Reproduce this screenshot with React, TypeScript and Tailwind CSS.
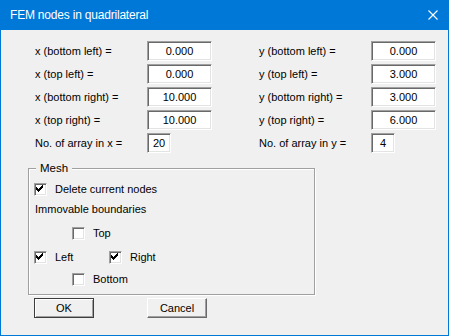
import React from 'react';

const font = { fontFamily: '"Liberation Sans", Arial, sans-serif' };

function Field({ label, value, small }: { label: string; value: string; small?: boolean }) {
  return (
    <div className="flex items-center">
      <div className="w-[112px] h-[20px] flex items-center">{label}</div>
      <div
        className={`${small ? 'w-[24px]' : 'w-[65px]'} h-[20px] bg-white flex items-center justify-center border border-t-[#a0a0a0] border-l-[#a0a0a0] border-b-white border-r-white shadow-[inset_1px_1px_0_#696969,inset_-1px_-1px_0_#e3e3e3]`}
      >
        {value}
      </div>
    </div>
  );
}

function CheckMark() {
  return (
    <svg width="13" height="13" viewBox="0 0 13 13" shapeRendering="crispEdges" className="absolute -left-[1px] -top-[1px]">
      <rect x="8" y="2" width="1" height="1" fill="#000" />
      <rect x="7" y="3" width="2" height="1" fill="#000" />
      <rect x="2" y="4" width="1" height="1" fill="#000" />
      <rect x="6" y="4" width="3" height="1" fill="#000" />
      <rect x="2" y="5" width="2" height="1" fill="#000" />
      <rect x="5" y="5" width="3" height="1" fill="#000" />
      <rect x="2" y="6" width="5" height="1" fill="#000" />
      <rect x="3" y="7" width="3" height="1" fill="#000" />
      <rect x="4" y="8" width="1" height="1" fill="#000" />
    </svg>
  );
}

function Check({ label, checked }: { label: string; checked?: boolean }) {
  return (
    <div className="flex items-center h-[13px]">
      <div className="relative w-[13px] h-[13px] bg-white border border-t-[#a0a0a0] border-l-[#a0a0a0] border-b-white border-r-white shadow-[inset_1px_1px_0_#696969,inset_-1px_-1px_0_#e3e3e3]">
        {checked && <CheckMark />}
      </div>
      <span className="ml-[8px] leading-[13px]">{label}</span>
    </div>
  );
}

export default function App() {
  return (
    <div className="w-[449px] h-[336px] bg-[#0078d7] flex flex-col text-[11px] text-black" style={font}>
      <div className="h-[30px] flex items-center justify-between pl-[10px] pr-[11px] text-white">
        <span className="text-[12px] tracking-[-0.2px]">FEM nodes in quadrilateral</span>
        <svg width="10" height="10" viewBox="0 0 10 10">
          <path d="M0.5 0.5 L9.5 9.5 M9.5 0.5 L0.5 9.5" stroke="#fff" strokeWidth="1.1" />
        </svg>
      </div>

      <div className="flex-1 mx-[1px] mb-[1px] bg-[#f0f0f0] flex flex-col">
        <div className="pt-[11px] pl-[34px] flex">
          <div className="flex flex-col gap-[3px]">
            <Field label="x (bottom left) =" value="0.000" />
            <Field label="x (top left) =" value="0.000" />
            <Field label="x (bottom right) =" value="10.000" />
            <Field label="x (top right) =" value="10.000" />
            <Field label="No. of array in x =" value="20" small />
          </div>
          <div className="flex flex-col gap-[3px] ml-[47px]">
            <Field label="y (bottom left) =" value="0.000" />
            <Field label="y (top left) =" value="3.000" />
            <Field label="y (bottom right) =" value="3.000" />
            <Field label="y (top right) =" value="6.000" />
            <Field label="No. of array in y =" value="4" small />
          </div>
        </div>

        <div className="relative mt-[15px] ml-[27px] w-[287px] h-[127px] border border-[#a0a0a0] shadow-[inset_1px_1px_0_#fff,1px_1px_0_#fff] pl-[5px] pt-[14px]">
          <span className="absolute left-[7px] -top-[7px] px-[4px] bg-[#f0f0f0] leading-[13px] text-[11.5px]">Mesh</span>
          <Check label="Delete current nodes" checked />
          <div className="mt-[7px] h-[13px] leading-[13px] pl-[1px]">Immovable boundaries</div>
          <div className="mt-[11px] ml-[38px]">
            <Check label="Top" />
          </div>
          <div className="mt-[11px] flex">
            <div className="w-[75px]">
              <Check label="Left" checked />
            </div>
            <Check label="Right" checked />
          </div>
          <div className="mt-[9px] ml-[38px]">
            <Check label="Bottom" />
          </div>
        </div>

        <div className="mt-[3px] ml-[33px] flex gap-[53px]">
          <button className="w-[60px] h-[20px] border border-[#3c3c3c] bg-[#f0f0f0] shadow-[inset_1px_1px_0_#fff,inset_-1px_-1px_0_#a0a0a0] flex items-center justify-center">
            OK
          </button>
          <button className="w-[60px] h-[20px] border border-t-white border-l-white border-b-[#696969] border-r-[#696969] bg-[#f0f0f0] shadow-[inset_-1px_-1px_0_#a0a0a0] flex items-center justify-center">
            Cancel
          </button>
        </div>
      </div>
    </div>
  );
}
